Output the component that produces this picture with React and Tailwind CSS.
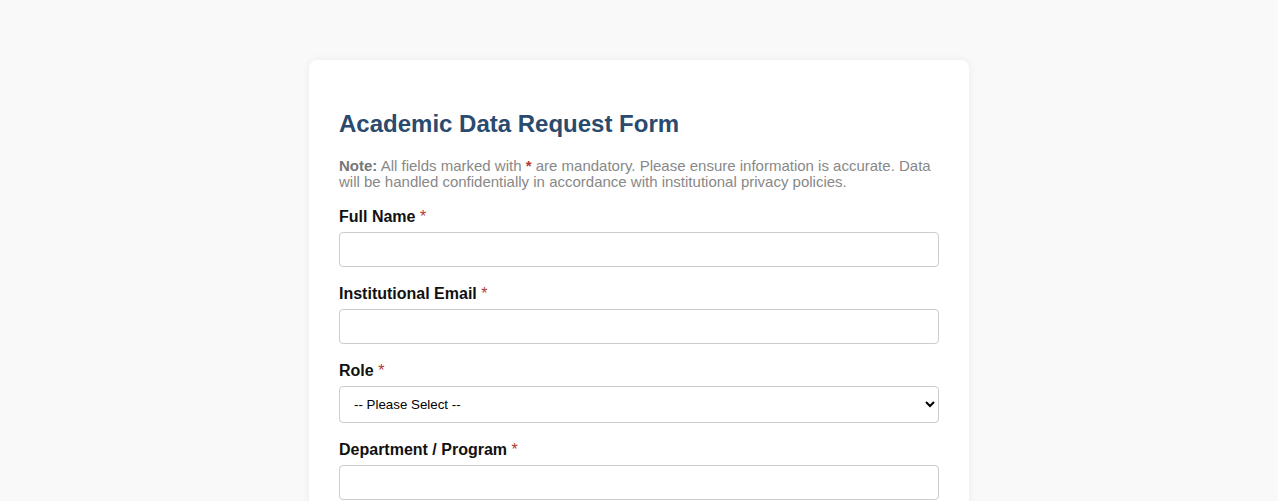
export default function App() {
  const Star = () => <span className="font-normal text-[#b03a2e]">*</span>;
  const inputCls =
    "block w-full h-[35px] border border-[#cccccc] rounded-[4px] bg-white px-[10px] text-[14px] outline-none";
  const labelCls = "block text-[16px] leading-[18px] font-bold text-[#111111] mb-[6px]";
  return (
    <div className="min-h-screen bg-[#f9f9f9] pt-[60px] pb-10" style={{ fontFamily: '"Liberation Sans", Arial, sans-serif' }}>
      <div className="mx-auto w-[660px] bg-white rounded-[8px] shadow-[0_0_10px_rgba(0,0,0,0.06)] px-[30px] pt-[50px] pb-[30px]">
        <h2 className="text-[24px] leading-[27.6px] font-bold text-[#2a4a6e] mb-[20px]">Academic Data Request Form</h2>
        <p className="text-[15px] leading-[16px] text-[#888888] mb-[18px]">
          <strong className="font-bold text-[#777777]">Note:</strong> All fields marked with <span className="font-bold text-[#b03a2e]">*</span> are mandatory. Please ensure information is accurate. Data will be handled confidentially in accordance with institutional privacy policies.
        </p>
        <div className="mb-[18px]">
          <label className={labelCls}>Full Name <Star /></label>
          <input type="text" className={inputCls} />
        </div>
        <div className="mb-[18px]">
          <label className={labelCls}>Institutional Email <Star /></label>
          <input type="email" className={inputCls} />
        </div>
        <div className="mb-[18px]">
          <label className={labelCls}>Role <Star /></label>
          <select className="block w-full h-[37px] border border-[#cccccc] rounded-[4px] bg-white px-[10px] text-[13.33px] text-black outline-none">
            <option>-- Please Select --</option>
          </select>
        </div>
        <div className="mb-[18px]">
          <label className={labelCls}>Department / Program <Star /></label>
          <input type="text" className={inputCls} />
        </div>
      </div>
    </div>
  );
}
